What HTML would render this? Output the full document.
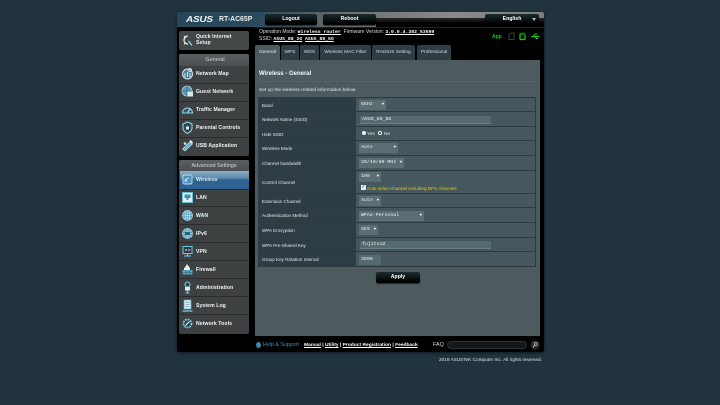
<!DOCTYPE html>
<html>
<head>
<meta charset="utf-8">
<style>
html,body{margin:0;padding:0;width:720px;height:405px;overflow:hidden;background:#21333f;font-family:"Liberation Sans",sans-serif;}
#w{position:absolute;left:0;top:0;width:720px;height:405px;filter:blur(.2px);}
.a{position:absolute;white-space:nowrap;}
.frame{left:177px;top:12px;width:367px;height:340px;background:#000;border-radius:2px;box-shadow:0 1px 3px rgba(0,0,0,.5);}
.top{left:177px;top:12px;width:367px;height:15px;border-radius:2px 2px 0 0;background:linear-gradient(90deg,#27465a 0,#2b4a5c 22%,#6a6f70 45%,#8a8a88 75%,#7d7d7b 100%);}
.topb{left:376px;top:18px;width:168px;height:9px;background:linear-gradient(#2a2a2a,#000 60%);}
.btn{background:linear-gradient(#1d2c30,#000 85%);border-radius:2px;color:#fff;text-align:center;font-size:5.2px;font-weight:bold;box-shadow:0 1px 1px rgba(0,0,0,.6);}
.side{background:#3e4142;border-radius:2px;}
.hd{background:linear-gradient(#5a5f61,#4a4e50);color:#d0d5d6;font-size:5.4px;text-align:center;border-radius:2px 2px 0 0;}
.it{left:179px;width:70px;height:18px;border-bottom:1px solid #2a2c2d;box-sizing:border-box;}
.lbl{left:196px;color:#f2f5f6;font-size:5.1px;font-weight:bold;letter-spacing:.1px;}
.ic{left:181px;width:13px;height:13px;}
.tab{top:45px;height:15px;background:#2e3d45;color:#d5dcdf;font-size:4.8px;text-align:center;line-height:16px;border-radius:2px 2px 0 0;}
.row{left:258px;width:278px;background:#46575d;border-bottom:1px solid #2d3b41;border-right:1px solid #2d3b41;box-sizing:border-box;}
.l{position:absolute;left:0;top:0;bottom:0;width:98px;background:#2e3d45;}
.rt{left:262px;color:#e2e7e9;font-size:4.6px;}
.sel{background:#5a6e73;color:#f0f4f5;font-family:"Liberation Mono",monospace;font-size:4.9px;line-height:10.5px;padding-left:2px;box-sizing:border-box;height:10px;}
.sel i{position:absolute;right:2px;top:0;font-style:normal;font-size:4px;color:#fff;}
.inp{left:360px;width:131px;height:9px;background:#566b70;border-top:1px solid #45565b;border-bottom:1px solid #6b7e83;color:#eef2f3;font-family:"Liberation Mono",monospace;font-size:4.9px;line-height:8px;padding-left:2px;box-sizing:border-box;}
.lnk{color:#fff;text-decoration:underline;font-weight:bold;font-family:"Liberation Mono",monospace;font-size:4.8px;}
</style>
</head>
<body>
<div id="w">
<div class="a frame"></div>
<div class="a top"></div>
<div class="a topb"></div>

<div class="a" style="left:186px;top:15px;color:#f2f6f8;font-size:8px;font-weight:bold;font-style:italic;letter-spacing:-.2px;transform:scaleX(1.25);transform-origin:left;line-height:10px;">ASUS</div>
<div class="a" style="left:219px;top:15px;color:#e8ecee;font-size:6.9px;font-weight:bold;line-height:10px;">RT-AC65P</div>

<div class="a btn" style="left:265px;top:14px;width:52px;height:11px;line-height:11.5px;">Logout</div>
<div class="a btn" style="left:323px;top:14px;width:53px;height:11px;line-height:11.5px;">Reboot</div>
<div class="a btn" style="left:485px;top:14px;width:54px;height:11px;line-height:11.5px;box-sizing:border-box;">English</div>
<div class="a" style="left:532px;top:18px;width:0;height:0;border-left:2.5px solid transparent;border-right:2.5px solid transparent;border-top:3.5px solid #a9c0c8;"></div>
<div class="a" style="left:255px;top:27px;width:288px;height:1px;background:#222;"></div>

<div class="a" style="left:259px;top:29px;color:#d5dbde;font-size:5px;line-height:7px;">Operation Mode: <span class="lnk">Wireless router</span> &nbsp;Firmware Version: <span class="lnk">3.0.0.4.382_53599</span></div>
<div class="a" style="left:259px;top:36px;color:#d5dbde;font-size:5px;line-height:7px;">SSID: <span class="lnk">ASUS_88_2G</span>&nbsp; <span class="lnk">ASUS_88_5G</span></div>

<div class="a" style="left:492px;top:34px;color:#14c814;font-size:5px;font-weight:bold;line-height:7px;">App</div>
<svg class="a" style="left:506px;top:32px;" width="34" height="9" viewBox="0 0 34 9"><path d="M3 7.5V2.5L5 1h3v6.5z" fill="none" stroke="#3c3c3c" stroke-width="1"/><rect x="14" y="2" width="5" height="5.5" rx="1" fill="none" stroke="#17c617" stroke-width="1.3"/><rect x="16" y="0.5" width="3" height="3" fill="#0a6a0a"/><path d="M25 4.5h8M27 4.5l2-2.5h2M29 4.5l1.500 2h1.500" fill="none" stroke="#17d017" stroke-width="1"/></svg>

<!-- QIS -->
<div class="a side" style="left:179px;top:31px;width:70px;height:19px;background:#434748;"></div>
<svg class="a ic" style="top:34px;" viewBox="0 0 13 13"><path d="M7 2a4 4 0 1 0 0 8M3 2l2 2M3 10l2-1" fill="none" stroke="#dfe8ea" stroke-width="1.300"/><path d="M7.500 7l3.500 4.500" stroke="#7fc4dc" stroke-width="1.500"/></svg>
<div class="a lbl" style="top:34px;line-height:6px;">Quick Internet<br>Setup</div>

<!-- General -->
<div class="a side" style="left:179px;top:54px;width:70px;height:102px;"></div>
<div class="a hd" style="left:179px;top:54px;width:70px;height:12px;line-height:12px;padding-left:2px;box-sizing:border-box;">General</div>
<div class="a it" style="top:66px;"></div><div class="a it" style="top:84px;"></div><div class="a it" style="top:102px;"></div><div class="a it" style="top:120px;"></div>
<svg class="a ic" style="top:67px;" viewBox="0 0 13 13"><circle cx="6.500" cy="7" r="5" fill="#4a7f96" stroke="#d5e6ec" stroke-width="1"/><circle cx="9" cy="3" r="1.500" fill="none" stroke="#e8f2f5" stroke-width=".8"/><path d="M4 6v4M6.500 5v5M9 6v4" stroke="#e8f2f5" stroke-width=".9"/></svg>
<div class="a lbl" style="top:71px;line-height:6px;">Network Map</div>
<svg class="a ic" style="top:85px;" viewBox="0 0 13 13"><circle cx="6" cy="6" r="5" fill="#5a9bb4" stroke="#a7d3e1" stroke-width=".8"/><rect x="6" y="6.500" width="6" height="5" fill="#d8e8ee"/><path d="M1 6h10M6 1v10" stroke="#2e5d70" stroke-width=".6"/></svg>
<div class="a lbl" style="top:89px;line-height:6px;">Guest Network</div>
<svg class="a ic" style="top:103px;" viewBox="0 0 13 13"><path d="M1.500 10a5 5 0 1 1 10 0z" fill="#2f5668" stroke="#8fd0e6" stroke-width="1.100"/><path d="M6.500 9.500l3-4" stroke="#e8f2f5" stroke-width="1"/></svg>
<div class="a lbl" style="top:107px;line-height:6px;">Traffic Manager</div>
<svg class="a ic" style="top:121px;" viewBox="0 0 13 13"><path d="M6.500 1l4.500 2v4c0 3-2.500 4.500-4.500 5.500C4.500 11.500 2 10 2 7V3z" fill="#2d4552" stroke="#9ad6ea" stroke-width="1.100"/><rect x="5" y="5.500" width="3" height="3" fill="#e0ecf0"/></svg>
<div class="a lbl" style="top:125px;line-height:6px;">Parental Controls</div>
<svg class="a ic" style="top:139px;" viewBox="0 0 13 13"><path d="M1.500 10L9 2.500l2.500 2.500L4 12z" fill="#6fb4cf" stroke="#cfe6ee" stroke-width=".6"/><path d="M9 1.500l2.500 2.500" stroke="#fff" stroke-width="1.300"/><circle cx="4" cy="4.500" r="1.300" fill="#cfe6ee"/></svg>
<div class="a lbl" style="top:143px;line-height:6px;">USB Application</div>

<!-- Advanced -->
<div class="a side" style="left:179px;top:160px;width:70px;height:174px;"></div>
<div class="a hd" style="left:179px;top:160px;width:70px;height:11px;line-height:12px;">Advanced Settings</div>
<div class="a" style="left:180px;top:171px;width:69px;height:18px;background:linear-gradient(#8fb0c8 0,#5b88ab 40%,#2e6494 50%,#2d6294 100%);"></div>
<div class="a it" style="top:189px;border-top:1px solid #2a2c2d;height:18px;"></div><div class="a it" style="top:207px;"></div><div class="a it" style="top:225px;"></div><div class="a it" style="top:243px;"></div><div class="a it" style="top:261px;"></div><div class="a it" style="top:279px;"></div><div class="a it" style="top:297px;"></div>

<svg class="a ic" style="top:173px;" viewBox="0 0 13 13"><rect x="2" y="2" width="9" height="9" rx="1.500" fill="#4f8fb8" stroke="#b5dcec" stroke-width=".9"/><path d="M4 9a4 4 0 0 1 4-4M4 6.500a2 2 0 0 1 2 2" fill="none" stroke="#e8f4f8" stroke-width=".8"/></svg>
<div class="a lbl" style="top:177px;line-height:6px;color:#dce6ea;">Wireless</div>
<svg class="a ic" style="top:191px;" viewBox="0 0 13 13"><rect x="1.500" y="1.500" width="10" height="10" fill="#e4eef2" stroke="#64bfdc" stroke-width="1"/><rect x="3.500" y="3.500" width="6" height="3.500" fill="#3b93b4"/><rect x="5.500" y="7" width="2" height="2" fill="#3b93b4"/></svg>
<div class="a lbl" style="top:195px;line-height:6px;">LAN</div>
<svg class="a ic" style="top:209px;" viewBox="0 0 13 13"><circle cx="6.500" cy="6.500" r="5" fill="#55a2bf" stroke="#9fd4e6" stroke-width=".7"/><path d="M1.500 6.500h10M6.500 1.500v10M2.500 4h8M2.500 9h8M4.500 2v9M8.500 2v9" stroke="#dceef4" stroke-width=".5"/></svg>
<div class="a lbl" style="top:213px;line-height:6px;">WAN</div>
<svg class="a ic" style="top:227px;" viewBox="0 0 13 13"><circle cx="6.500" cy="6.500" r="5" fill="#55a2bf" stroke="#9fd4e6" stroke-width=".7"/><path d="M1.500 6.500h10M6.500 1.500v10M2.500 4h8M2.500 9h8" stroke="#dceef4" stroke-width=".5"/><rect x="4" y="5" width="5" height="3" fill="#36606f"/></svg>
<div class="a lbl" style="top:231px;line-height:6px;">IPv6</div>
<svg class="a ic" style="top:245px;" viewBox="0 0 13 13"><rect x="2" y="1.500" width="9" height="7" fill="#2a3a40" stroke="#6fcbe6" stroke-width="1"/><path d="M4 5h2M7 5h2" stroke="#e8f2f5" stroke-width="1"/><path d="M6.500 8.500v2M3 11h7" stroke="#6fcbe6" stroke-width="1"/></svg>
<div class="a lbl" style="top:249px;line-height:6px;">VPN</div>
<svg class="a ic" style="top:263px;" viewBox="0 0 13 13"><path d="M6 1c1 2 3 3 3 5v1H3V5c1 0 1-1 3-4z" fill="#e8eef0"/><rect x="1.500" y="7" width="10" height="4.500" fill="#5aa6c6"/><path d="M1.500 9.200h10M5 7v4.500M8.500 7v4.500" stroke="#2c5566" stroke-width=".5"/></svg>
<div class="a lbl" style="top:267px;line-height:6px;">Firewall</div>
<svg class="a ic" style="top:281px;" viewBox="0 0 13 13"><circle cx="6.500" cy="3.500" r="2.500" fill="none" stroke="#6fcbe6" stroke-width="1.100"/><rect x="4" y="6" width="5" height="3.500" fill="#e0ecf0"/><path d="M6.500 9.500v3M4.500 12h4" stroke="#6fcbe6" stroke-width="1.100"/></svg>
<div class="a lbl" style="top:285px;line-height:6px;">Administration</div>
<svg class="a ic" style="top:299px;" viewBox="0 0 13 13"><rect x="3" y="1" width="7" height="9" fill="#dbe8ec" stroke="#5fb6d4" stroke-width=".7"/><path d="M4.500 3.500h4M4.500 5.500h4M4.500 7.500h4" stroke="#4b7f92" stroke-width=".6"/><path d="M1.500 12h10" stroke="#6fcbe6" stroke-width="1.300"/></svg>
<div class="a lbl" style="top:303px;line-height:6px;">System Log</div>
<svg class="a ic" style="top:317px;" viewBox="0 0 13 13"><circle cx="6.500" cy="6.500" r="4" fill="#26414d" stroke="#7fd0e8" stroke-width="1.800" stroke-dasharray="1.800 .9"/><path d="M4.500 8.500l4-4" stroke="#f0f6f8" stroke-width="1.100"/></svg>
<div class="a lbl" style="top:321px;line-height:6px;">Network Tools</div>

<!-- Tabs -->
<div class="a tab" style="left:255px;width:25px;background:#4d5b5f;color:#e8ecee;">General</div>
<div class="a tab" style="left:281px;width:18px;">WPS</div>
<div class="a tab" style="left:300px;width:19px;">WDS</div>
<div class="a tab" style="left:320px;width:51px;">Wireless MAC Filter</div>
<div class="a tab" style="left:372px;width:43px;">RADIUS Setting</div>
<div class="a tab" style="left:417px;width:34px;">Professional</div>

<!-- Content -->
<div class="a" style="left:255px;top:60px;width:285px;height:276px;background:#4d5b5f;"></div>
<div class="a" style="left:259px;top:70px;color:#f4f6f7;font-size:6px;font-weight:bold;line-height:8px;">Wireless - General</div>
<div class="a" style="left:258px;top:81px;width:278px;height:1px;background:#566468;"></div>
<div class="a" style="left:259px;top:87px;color:#e2e7e9;font-size:4.85px;line-height:7px;">Set up the wireless related information below</div>

<!-- Table -->
<div class="a row" style="top:97px;height:15px;border-top:1px solid #2d3b41;"><div class="l"></div></div>
<div class="a row" style="top:112px;height:15px;"><div class="l"></div></div>
<div class="a row" style="top:127px;height:14px;"><div class="l"></div></div>
<div class="a row" style="top:141px;height:15px;"><div class="l"></div></div>
<div class="a row" style="top:156px;height:15px;"><div class="l"></div></div>
<div class="a row" style="top:171px;height:23px;"><div class="l"></div></div>
<div class="a row" style="top:194px;height:14px;"><div class="l"></div></div>
<div class="a row" style="top:208px;height:15px;"><div class="l"></div></div>
<div class="a row" style="top:223px;height:15px;"><div class="l"></div></div>
<div class="a row" style="top:238px;height:14px;"><div class="l"></div></div>
<div class="a row" style="top:252px;height:15px;"><div class="l"></div></div>

<div class="a rt" style="top:103px;line-height:6px;">Band</div>
<div class="a rt" style="top:117px;line-height:6px;">Network Name (SSID)</div>
<div class="a rt" style="top:132px;line-height:6px;">Hide SSID</div>
<div class="a rt" style="top:146px;line-height:6px;">Wireless Mode</div>
<div class="a rt" style="top:161px;line-height:6px;">Channel bandwidth</div>
<div class="a rt" style="top:180px;line-height:6px;">Control Channel</div>
<div class="a rt" style="top:199px;line-height:6px;">Extension Channel</div>
<div class="a rt" style="top:213px;line-height:6px;">Authentication Method</div>
<div class="a rt" style="top:228px;line-height:6px;">WPA Encryption</div>
<div class="a rt" style="top:243px;line-height:6px;">WPA Pre-Shared Key</div>
<div class="a rt" style="top:257px;line-height:6px;">Group Key Rotation Interval</div>

<div class="a sel" style="left:359px;top:100px;width:27px;">5GHz<i>▼</i></div>
<div class="a inp" style="top:115px;">ASUS_88_5G</div>
<div class="a" style="left:362px;top:131px;width:4px;height:4px;border-radius:50%;background:#eef2f3;"></div>
<div class="a" style="left:367px;top:131px;color:#e2e7e9;font-size:4.8px;line-height:7px;">Yes</div>
<div class="a" style="left:378px;top:131px;width:4px;height:4px;border-radius:50%;background:#333;border:.7px solid #eef2f3;box-sizing:border-box;"></div>
<div class="a" style="left:384px;top:131px;color:#e2e7e9;font-size:4.8px;line-height:7px;">No</div>
<div class="a sel" style="left:359px;top:143px;width:39px;">Auto<i>▼</i></div>
<div class="a sel" style="left:359px;top:158px;width:45px;">20/40/80 MHz<i>▼</i></div>
<div class="a sel" style="left:359px;top:172px;width:22px;">100<i>▼</i></div>
<div class="a" style="left:361px;top:185px;width:5px;height:5px;background:#e6ecee;color:#234;font-size:5px;line-height:5px;text-align:center;">✓</div>
<div class="a" style="left:367px;top:185px;color:#e8c81c;font-size:4.6px;line-height:7px;">Auto select channel including DFS channels</div>
<div class="a sel" style="left:359px;top:196px;width:22px;">Auto<i>▼</i></div>
<div class="a sel" style="left:359px;top:211px;width:65px;">WPA2-Personal<i>▼</i></div>
<div class="a sel" style="left:359px;top:225px;width:19px;">AES<i>▼</i></div>
<div class="a inp" style="top:240px;">fujitsu2</div>
<div class="a sel" style="left:359px;top:255px;width:22px;background:#566b70;">3600</div>

<div class="a btn" style="left:376px;top:272px;width:44px;height:11px;line-height:11px;">Apply</div>

<!-- Footer -->
<div class="a" style="left:256px;top:342px;width:5px;height:6px;border-radius:50%;background:#3b88ac;"></div>
<div class="a" style="left:263px;top:342px;color:#3b8ec8;font-size:5.3px;line-height:7px;">Help &amp; Support</div>
<div class="a" style="left:304px;top:342px;color:#fff;font-size:4.9px;line-height:7px;font-weight:bold;"><u>Manual</u> | <u>Utility</u> | <u>Product Registration</u> | <u>Feedback</u></div>
<div class="a" style="left:433px;top:342px;color:#d8dee0;font-size:5.4px;line-height:7px;">FAQ</div>
<div class="a" style="left:447px;top:341px;width:80px;height:8px;border-radius:4px;background:#14181a;border:.5px solid #2c3033;box-sizing:border-box;"></div>
<svg class="a" style="left:530px;top:340px;" width="10" height="10" viewBox="0 0 10 10"><circle cx="5" cy="5" r="4.500" fill="#2a2d2e"/><circle cx="5.800" cy="4" r="1.500" fill="none" stroke="#bcc4c6" stroke-width=".8"/><path d="M4.800 5L3 7.500" stroke="#bcc4c6" stroke-width=".9"/></svg>

<div class="a" style="left:439px;top:356px;color:#dde2e4;font-size:4.7px;line-height:7px;">2019 ASUSTeK Computer Inc. All rights reserved.</div>
</div>
</body>
</html>
